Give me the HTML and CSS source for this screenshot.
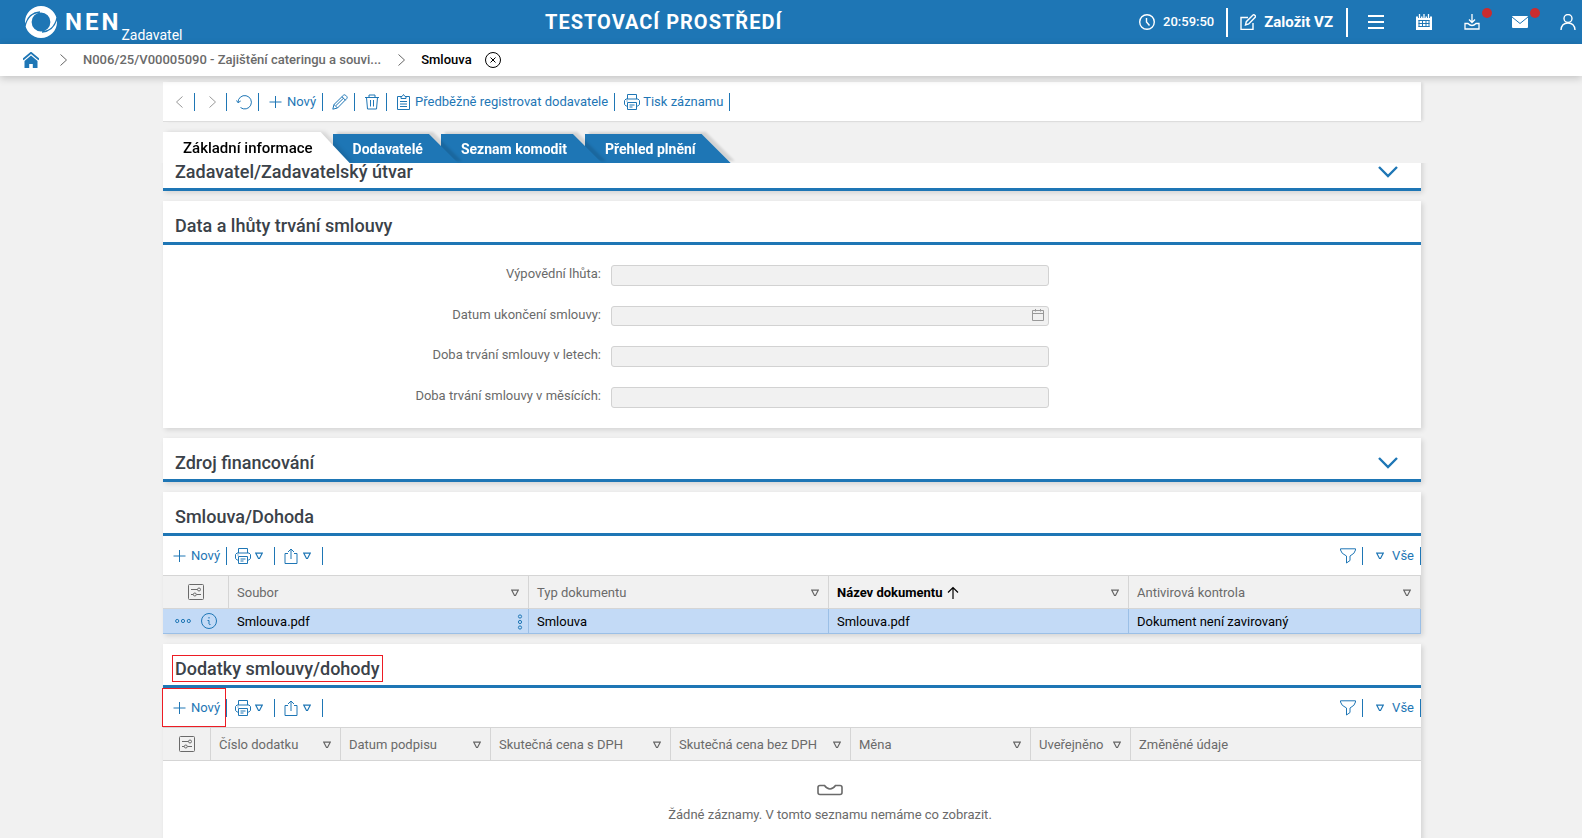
FILE: index.html
```html
<!DOCTYPE html>
<html lang="cs">
<head>
  <meta charset="UTF-8" />
  <meta name="viewport" content="width=device-width, initial-scale=1.0" />
  <title>NEN - Smlouva</title>
  <link rel="stylesheet" href="styles.css">
</head>
<body>
  <!-- icon set -->
  <svg class="sprite" aria-hidden="true">
    <symbol id="i-left" viewBox="0 0 16 16"><path d="M10.500 2.500L4.500 8l6 5.500" /></symbol>
    <symbol id="i-right" viewBox="0 0 16 16"><path d="M5.500 2.500L11.500 8l-6 5.500" /></symbol>
    <symbol id="i-refresh" viewBox="0 0 16 16"><path d="M2 8.500a6.700 6.700 0 1 1 2.500 5M0.500 6.500L2 8.700l2.700-1.700" /></symbol>
    <symbol id="i-plus" viewBox="0 0 16 16"><path d="M7.500 2v12M1.500 8h12" /></symbol>
    <symbol id="i-edit" viewBox="0 0 16 16"><path d="M.8 15.200l1.200-4.700L11.500 1.200q1-.8 2 0l1.300 1.300q.8 1 0 2L5.500 14zM2 10.500L5.500 14M10 2.800l3.500 3.500M4 11.500l7.500-7.300" /></symbol>
    <symbol id="i-trash" viewBox="0 0 16 16"><path d="M1 3.500h14M5 3V1h6v2M2.500 3.500l1 11.500h9l1-11.500M6.500 6v6.500M9.500 6v6.500" /></symbol>
    <symbol id="i-clip" viewBox="0 0 16 16"><path d="M5 2.500H1.500v13h12v-13H10M5 4.500v-2h1L7.500.5 9 2.500h1v2zM4 7.500h7M4 10h7M4 12.500h7" /></symbol>
    <symbol id="i-print" viewBox="0 0 16 16"><path d="M3.500 5V.5h9V5M3.500 12H2.200L.5 10.500V6.500L2 5h12l1.500 1.500v4L13.800 12h-1.300M3.500 8.500h9v7h-9zM5.500 11h5M5.500 13h3M2.500 7h1" /></symbol>
    <symbol id="i-share" viewBox="0 0 16 16"><path d="M5 5.500H2v10h12v-10h-3M8 11V1M5 4l3-3 3 3" /></symbol>
    <symbol id="i-funnel" viewBox="0 0 16 16"><path d="M.5.800h15v1.200q-.5 3.500-5.500 6v4.500L6.500 15V8Q1 5.500.5 2z" /></symbol>
    <symbol id="i-caret" viewBox="0 0 8 8"><path d="M.8 1.200h6.400L4.500 6.500h-1z" /></symbol>
    <symbol id="i-chevron" viewBox="0 0 20 12"><path d="M1 1l9 9 9-9" /></symbol>
    <symbol id="i-config" viewBox="0 0 16 16"><rect x=".5" y=".5" width="15" height="15" rx="1" /><path d="M3 5.500h6.500M3 10.500h2M8.500 10.500H13" /><circle cx="11" cy="5.500" r="1.500" /><circle cx="6.800" cy="10.500" r="1.500" /></symbol>
    <symbol id="i-dots" viewBox="0 0 16 16"><circle cx="2.200" cy="8" r="1.600" /><circle cx="8" cy="8" r="1.600" /><circle cx="13.800" cy="8" r="1.600" /></symbol>
    <symbol id="i-info" viewBox="0 0 16 16"><circle cx="8" cy="8" r="7.500" /><path d="M8 4v1.500M6.500 7.500H8V11q.5 1 1.500.5" /></symbol>
    <symbol id="i-sort" viewBox="0 0 12 14"><path d="M6 13V1.500M1 6.500l5-5 5 5" /></symbol>
    <symbol id="i-date" viewBox="0 0 16 16"><path d="M2.500 3.500h11v10h-11zM2.500 6.500h11M5.500 2v2.500M10.500 2v2.500" /></symbol>
    <symbol id="i-close" viewBox="0 0 16 16"><circle cx="8" cy="8" r="7.500" /><path d="M5.500 5.500l5 5M10.500 5.500l-5 5" /></symbol>
    <symbol id="i-clock" viewBox="0 0 16 16"><circle cx="8" cy="8" r="7.300" /><path d="M7.500 4v4l3 3.500" /></symbol>
    <symbol id="i-create" viewBox="0 0 16 16"><path d="M8 3.500H1v12h12V9M5.500 11l.8-3.300L13 1q.8-.6 1.500 0l.7.700q.5.800 0 1.500L8.700 10z" /></symbol>
  </svg>

  <header class="topbar">
    <a class="logo" href="#">
      <svg width="32" height="32" viewBox="0 0 32 32">
        <circle cx="16" cy="16" r="12.700" fill="none" stroke="#fff" stroke-width="6.600" />
        <path d="M0 20Q3 7 15 6M32 12Q29 25 17 26" fill="none" stroke="#1e76b5" stroke-width="1.300" />
      </svg>
      <span class="brand">NEN</span>
      <span class="role">Zadavatel</span>
    </a>
    <strong class="env">TESTOVACÍ PROSTŘEDÍ</strong>
    <div class="top-actions">
      <span class="clock"><svg class="icon"><use href="#i-clock" /></svg>20:59:50</span>
      <button class="create" type="button"><svg class="icon"><use href="#i-create" /></svg>Založit VZ</button>
      <nav class="top-icons">
        <button type="button" aria-label="Menu"><svg class="icon" viewBox="0 0 16 16"><path d="M0 2h16M0 8h16M0 14h16" stroke-width="2" /></svg></button>
        <button type="button" aria-label="Kalendář">
          <svg class="icon" viewBox="0 0 16 16"><path d="M0 2.500h16V16H0z" fill="#fff" stroke="none" /><path d="M3.500 0v4M8 0v4M12.500 0v4" stroke="#1e76b5" stroke-width="3" /><path d="M3.500 0v4M8 0v4M12.500 0v4" stroke-width="1.300" /><path d="M2.500 6.500h11M2.500 9.500h11M2.500 12.500h11M3 6v7M6.500 6v7M10 6v7M13 6v7" stroke="#1e76b5" /></svg>
        </button>
        <button type="button" aria-label="Stahování">
          <svg class="icon" viewBox="0 0 16 16"><path d="M8 0v8M5 5.500L8 8.500l3-3M1 9.500h3q4 4 8 0h3v5.500H1z" stroke-width="1.300" /></svg>
          <span class="dot"></span>
        </button>
        <button type="button" aria-label="Zprávy">
          <svg class="icon" viewBox="0 0 16 16"><rect y="2" width="16" height="12" rx="1" fill="#fff" stroke="none" /><path d="M0 3l8 6.500L16 3" stroke="#1e76b5" /></svg>
          <span class="dot"></span>
        </button>
        <button type="button" aria-label="Uživatel"><svg class="icon" viewBox="0 0 16 16"><circle cx="8" cy="4.500" r="4" stroke-width="1.400" /><path d="M1 16q.5-7 7-7t7 7" stroke-width="1.400" /></svg></button>
      </nav>
    </div>
  </header>

  <nav class="breadcrumb">
    <a class="home" href="#" aria-label="Domů">
      <svg width="16" height="16" viewBox="0 0 16 16"><path d="M0 7.500L8 .8l8 6.700" fill="none" stroke="#1e76b5" stroke-width="1.800" /><path d="M1.500 9L8 3.500 14.500 9v7h-4.700v-4H6.200v4H1.500z" fill="#1e76b5" /></svg>
    </a>
    <svg class="icon sep"><use href="#i-right" /></svg>
    <a href="#">N006/25/V00005090 - Zajištění cateringu a souvi...</a>
    <svg class="icon sep"><use href="#i-right" /></svg>
    <span class="current">Smlouva</span>
    <button class="close" type="button" aria-label="Zavřít"><svg class="icon"><use href="#i-close" /></svg></button>
  </nav>

  <main>
    <div class="toolbar record-bar">
      <button class="muted" type="button" aria-label="Předchozí"><svg class="icon"><use href="#i-left" /></svg></button>
      <button class="muted" type="button" aria-label="Další"><svg class="icon"><use href="#i-right" /></svg></button>
      <button type="button" aria-label="Obnovit"><svg class="icon"><use href="#i-refresh" /></svg></button>
      <button type="button"><svg class="icon"><use href="#i-plus" /></svg>Nový</button>
      <button type="button" aria-label="Upravit"><svg class="icon"><use href="#i-edit" /></svg></button>
      <button type="button" aria-label="Smazat"><svg class="icon"><use href="#i-trash" /></svg></button>
      <button type="button"><svg class="icon"><use href="#i-clip" /></svg>Předběžně registrovat dodavatele</button>
      <button type="button"><svg class="icon"><use href="#i-print" /></svg>Tisk záznamu</button>
    </div>

    <div class="tabs" role="tablist">
      <button class="tab active" type="button" role="tab"><span>Základní informace</span></button>
      <button class="tab" type="button" role="tab"><span>Dodavatelé</span></button>
      <button class="tab" type="button" role="tab"><span>Seznam komodit</span></button>
      <button class="tab" type="button" role="tab"><span>Přehled plnění</span></button>
    </div>

    <div class="content">
      <section class="card scrolled">
        <header class="card-head">
          <h2>Zadavatel/Zadavatelský útvar</h2>
          <button type="button" aria-label="Rozbalit"><svg class="chevron"><use href="#i-chevron" /></svg></button>
        </header>
      </section>

      <section class="card">
        <header class="card-head"><h2>Data a lhůty trvání smlouvy</h2></header>
        <form class="fields">
          <div class="field">
            <label for="notice">Výpovědní lhůta:</label>
            <input type="text" id="notice" disabled />
          </div>
          <div class="field">
            <label for="endDate">Datum ukončení smlouvy:</label>
            <div class="with-icon">
              <input type="text" id="endDate" disabled />
              <svg class="icon"><use href="#i-date" /></svg>
            </div>
          </div>
          <div class="field">
            <label for="years">Doba trvání smlouvy v letech:</label>
            <input type="text" id="years" disabled />
          </div>
          <div class="field">
            <label for="months">Doba trvání smlouvy v měsících:</label>
            <input type="text" id="months" disabled />
          </div>
        </form>
      </section>

      <section class="card">
        <header class="card-head">
          <h2>Zdroj financování</h2>
          <button type="button" aria-label="Rozbalit"><svg class="chevron"><use href="#i-chevron" /></svg></button>
        </header>
      </section>

      <section class="card">
        <header class="card-head"><h2>Smlouva/Dohoda</h2></header>
        <div class="toolbar">
          <button type="button"><svg class="icon"><use href="#i-plus" /></svg>Nový</button>
          <button class="drop" type="button" aria-label="Tisk"><svg class="icon"><use href="#i-print" /></svg><svg class="caret"><use href="#i-caret" /></svg></button>
          <button class="drop" type="button" aria-label="Export"><svg class="icon"><use href="#i-share" /></svg><svg class="caret"><use href="#i-caret" /></svg></button>
          <button class="push" type="button" aria-label="Filtr"><svg class="icon"><use href="#i-funnel" /></svg></button>
          <button class="view" type="button"><svg class="caret"><use href="#i-caret" /></svg>Vše</button>
        </div>
        <table>
          <colgroup><col class="w66"><col class="w300"><col class="w300"><col class="w300"><col></colgroup>
          <thead>
            <tr>
              <th class="tool"><svg class="icon"><use href="#i-config" /></svg></th>
              <th><div class="th">Soubor<svg class="caret"><use href="#i-caret" /></svg></div></th>
              <th><div class="th">Typ dokumentu<svg class="caret"><use href="#i-caret" /></svg></div></th>
              <th class="sorted"><div class="th">Název dokumentu<svg class="sort"><use href="#i-sort" /></svg><svg class="caret"><use href="#i-caret" /></svg></div></th>
              <th><div class="th">Antivirová kontrola<svg class="caret"><use href="#i-caret" /></svg></div></th>
            </tr>
          </thead>
          <tbody>
            <tr>
              <td class="row-tools"><div class="tools"><svg class="icon"><use href="#i-dots" /></svg><svg class="icon"><use href="#i-info" /></svg></div></td>
              <td><div class="file">Smlouva.pdf<svg class="vdots" viewBox="0 0 6 16"><circle cx="3" cy="2.500" r="1.600" /><circle cx="3" cy="8" r="1.600" /><circle cx="3" cy="13.500" r="1.600" /></svg></div></td>
              <td>Smlouva</td>
              <td>Smlouva.pdf</td>
              <td>Dokument není zavirovaný</td>
            </tr>
          </tbody>
        </table>
      </section>

      <section class="card grow">
        <header class="card-head"><h2 class="marked">Dodatky smlouvy/dohody</h2></header>
        <div class="toolbar">
          <button class="marked" type="button"><svg class="icon"><use href="#i-plus" /></svg>Nový</button>
          <button class="drop" type="button" aria-label="Tisk"><svg class="icon"><use href="#i-print" /></svg><svg class="caret"><use href="#i-caret" /></svg></button>
          <button class="drop" type="button" aria-label="Export"><svg class="icon"><use href="#i-share" /></svg><svg class="caret"><use href="#i-caret" /></svg></button>
          <button class="push" type="button" aria-label="Filtr"><svg class="icon"><use href="#i-funnel" /></svg></button>
          <button class="view" type="button"><svg class="caret"><use href="#i-caret" /></svg>Vše</button>
        </div>
        <table>
          <colgroup><col class="w48"><col class="w130"><col class="w150"><col class="w180"><col class="w180"><col class="w180"><col class="w100"><col></colgroup>
          <thead>
            <tr>
              <th class="tool"><svg class="icon"><use href="#i-config" /></svg></th>
              <th><div class="th">Číslo dodatku<svg class="caret"><use href="#i-caret" /></svg></div></th>
              <th><div class="th">Datum podpisu<svg class="caret"><use href="#i-caret" /></svg></div></th>
              <th><div class="th">Skutečná cena s DPH<svg class="caret"><use href="#i-caret" /></svg></div></th>
              <th><div class="th">Skutečná cena bez DPH<svg class="caret"><use href="#i-caret" /></svg></div></th>
              <th><div class="th">Měna<svg class="caret"><use href="#i-caret" /></svg></div></th>
              <th><div class="th">Uveřejněno<svg class="caret"><use href="#i-caret" /></svg></div></th>
              <th class="open"><div class="th">Změněné údaje</div></th>
            </tr>
          </thead>
        </table>
        <div class="empty">
          <svg width="26" height="12" viewBox="0 0 26 12"><path d="M3 1.500h4.500q2.500 3.500 5.500 3.500t5.500-3.500H23q2 0 2 2V8.500q0 2-2 2H3q-2 0-2-2v-5q0-2 2-2z" /></svg>
          <p>Žádné záznamy. V tomto seznamu nemáme co zobrazit.</p>
        </div>
      </section>
    </div>
  </main>
</body>
</html>
```
FILE: styles.css
```css
* { box-sizing: border-box; }
body {
  font-family: Roboto, "Liberation Sans", sans-serif;
  font-size: 13px; line-height: 16px;
  margin: 0; height: 100vh; overflow: hidden;
  display: flex; flex-direction: column;
  background: #f1f1f1; color: #6a6a6a;
}
button {
  font: inherit; color: inherit; background: none;
  border: 0; margin: 0; padding: 0; cursor: pointer;
}
a { color: inherit; text-decoration: none; }
h2, p { margin: 0; }
svg { display: block; flex: none; }
.sprite { position: absolute; width: 0; height: 0; }
.icon { width: 16px; height: 16px; fill: none; stroke: currentColor; }
.caret { width: 8px; height: 8px; fill: none; stroke: currentColor; stroke-width: 1.2; }
.chevron { width: 20px; height: 12px; fill: none; stroke: #1e76b5; stroke-width: 2.4; }

/* top bar */
.topbar {
  display: grid; grid-template-columns: 520px auto 1fr; align-items: center;
  flex: none; height: 44px; padding: 0 6px 0 25px;
  background: #1e76b5; color: #fff;
}
.logo { display: flex; align-items: center; }
.brand { margin-left: 8px; font-size: 24px; font-weight: 700; letter-spacing: 3px; }
.role { align-self: flex-end; font-size: 14px; margin-bottom: -5px; }
.env { font-size: 20px; letter-spacing: 1px; }
.top-actions { display: flex; align-items: center; justify-content: flex-end; }
.clock { display: flex; align-items: center; gap: 8px; padding-right: 12px; font-weight: 500; }
.clock .icon, .create .icon { stroke-width: 1.4; }
.create {
  display: flex; align-items: center; gap: 8px;
  height: 29px; padding: 0 13px 0 12px;
  border: solid #fff; border-width: 0 2px;
  font-size: 15px; font-weight: 700;
}
.top-icons { display: flex; gap: 32px; margin-left: 20px; }
.top-icons button { position: relative; }
.dot {
  position: absolute; top: -6px; right: -12px;
  width: 10px; height: 10px; border-radius: 50%; background: #ca2c2e;
}

.breadcrumb {
  position: relative; z-index: 5;
  display: flex; align-items: center; flex: none;
  height: 32px; padding-left: 23px;
  background: #fff; font-weight: 500;
  box-shadow: 0 2px 8px rgba(0,0,0,0.2);
}
.sep { margin: 0 12px; color: #666; }
.home + .sep { margin-left: 16px; }
.current { color: #000; }
.close { margin-left: 13px; color: #000; }

/* record toolbar and tabs */
main { flex: 1; min-height: 0; display: flex; flex-direction: column; padding-top: 6px; }
.toolbar { display: flex; align-items: center; height: 39px; color: #1e76b5; }
.toolbar button {
  display: flex; align-items: center; gap: 3px;
  height: 18px; padding: 0 6px 0 9px;
  border-right: 1px solid #1e76b5;
}
.toolbar .muted .icon { color: #999; }
.toolbar .drop { gap: 4px; width: 48px; padding-left: 8px; }
.toolbar .push { margin-left: auto; }
.toolbar .view { gap: 8px; padding-left: 13px; }
.record-bar {
  flex: none; height: 40px; margin: 0 161px 0 163px;
  background: #fff; border-bottom: 1px solid #ddd;
  box-shadow: 3px 0 3px -1px rgba(0,0,0,0.1);
}
.tabs {
  display: flex; align-items: flex-end; flex: none;
  height: 41px; padding: 0 161px 0 163px; overflow: hidden;
}
.tab {
  position: relative; z-index: 1; height: 29px;
  padding: 0 35px 0 20px;
  color: #fff; font-size: 14px; font-weight: 700;
  filter: drop-shadow(4px -2px 1px rgba(0,0,0,0.12));
}
.tab::before {
  content: ""; position: absolute; inset: 0;
  background: #1e76b5;
  clip-path: polygon(0 0, calc(100% - 29px) 0, 100% 100%, 0 100%);
}
.tab span { position: relative; }
.tab + .tab { margin-left: -17px; }
.tab:nth-child(2) { z-index: 3; }
.tab:nth-child(3) { z-index: 2; }
.tab.active {
  z-index: 4; height: 31px; padding-right: 37px;
  color: #000; font-size: 15px; font-weight: 500;
  filter: drop-shadow(4px 0 2px rgba(0,0,0,0.12));
}
.tab.active::before { background: #fff; }

/* cards */
.content {
  flex: 1; min-height: 0; overflow: hidden;
  display: flex; flex-direction: column; gap: 10px;
  padding: 0 161px 0 163px;
}
.card { flex: none; background: #fff; box-shadow: 2px 2px 5px rgba(0,0,0,0.12); }
.scrolled { margin-top: -16px; }
.grow { flex: 1 0 auto; }
.card-head {
  display: flex; align-items: center; justify-content: space-between;
  height: 44px; padding: 9px 23px 0 12px;
  border-bottom: 3px solid #1e76b5;
}
.card-head h2 { font-size: 18px; line-height: 16px; font-weight: 500; color: #3b4249; }

.fields { display: grid; gap: 20px; padding: 20px 0; }
.field { display: grid; grid-template-columns: 438fr 438fr 362fr; gap: 10px; }
.field label { text-align: right; line-height: 18px; }
.field input {
  display: block; width: 100%; height: 21px; padding: 0 8px;
  border: 1px solid #d2d2d2; border-radius: 3px; background: #f1f1f1;
}
.with-icon { position: relative; }
.field .with-icon input { height: 20px; }
.with-icon .icon { position: absolute; top: 1px; right: 3px; color: #999; }

/* grids */
table { width: 100%; border-collapse: separate; border-spacing: 0; table-layout: fixed; }
th {
  height: 34px; padding: 1px 9px 0 8px;
  background: #f1f1f1; font-weight: 400; text-align: left;
  border: solid #d5d5d5; border-width: 1px 1px 1px 0;
}
th.tool { padding: 0; }
th.tool .icon { margin: 0 auto; }
th.open { border-right: 0; }
th.sorted { color: #000; font-weight: 700; }
.th { display: flex; align-items: center; }
.th .caret { margin-left: auto; color: #666; }
.sort { width: 12px; height: 14px; margin-left: 4px; fill: none; stroke: #000; stroke-width: 1.2; }
td {
  height: 25px; padding: 2px 5px 0 8px;
  background: #c3daf6; color: #000;
  border: solid #9bbfe6; border-width: 0 1px 1px 0;
}
td.row-tools { padding: 0 0 0 12px; border-right: 0; }
.tools { display: flex; gap: 10px; color: #1e76b5; }
.file { display: flex; align-items: center; justify-content: space-between; }
.vdots { width: 6px; height: 16px; fill: none; stroke: #1e76b5; }
.w48 { width: 48px; }
.w66 { width: 66px; }
.w100 { width: 100px; }
.w130 { width: 130px; }
.w150 { width: 150px; }
.w180 { width: 180px; }
.w300 { width: 300px; }

.empty {
  display: flex; flex-direction: column; align-items: center; gap: 11px;
  height: 130px; padding: 23px 0 0 76px;
}
.empty svg { fill: none; stroke: #6a6a6a; stroke-width: 1.6; }

/* red frames over the heading and the button */
.marked { position: relative; }
.marked::after {
  content: ""; position: absolute; inset: -6px -3px -5px;
  border: 1px solid #ed1c24; pointer-events: none;
}
.toolbar .marked::after { inset: -11px 0 -10px -1px; }
```
